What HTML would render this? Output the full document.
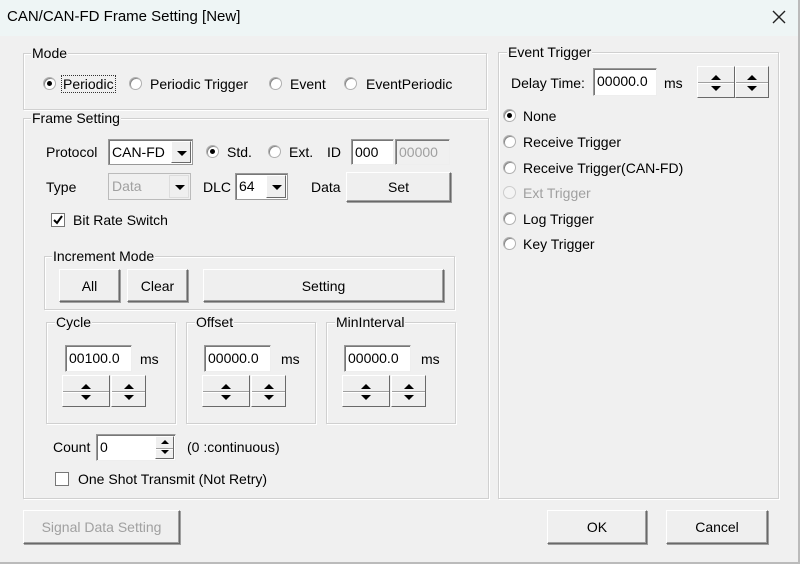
<!DOCTYPE html>
<html><head><meta charset="utf-8"><style>
*{box-sizing:border-box;margin:0;padding:0}
body{width:800px;height:564px;background:#f0f0f0;font-family:"Liberation Sans",sans-serif;font-size:14px;color:#000;position:relative;overflow:hidden}
.a{position:absolute;white-space:nowrap}
.t{position:absolute;white-space:nowrap;line-height:16px}
.grp{position:absolute;border:1px solid #d0d0d0;box-shadow:inset 1px 1px 0 #fff,1px 1px 0 #fff}
.lbl{position:absolute;background:#f0f0f0;padding:0 1px;line-height:14px;top:-8px}
.btn{position:absolute;background:#efefef;border:1px solid #fff;border-right-color:#696969;border-bottom-color:#696969;box-shadow:1px 1px 0 #a0a0a0 ,inset -1px -1px 0 #a0a0a0;display:flex;align-items:center;justify-content:center}
.edit{position:absolute;background:#fff;border:1px solid #999;border-right-color:#eee;border-bottom-color:#eee;box-shadow:inset 1px 1px 0 #777;padding-left:3px;line-height:24px}
.rad{position:absolute;width:13px;height:13px;border-radius:50%;background:#fff;border:1px solid #b0b0b0;box-shadow:inset 1px 1px 0 #888}
.rad.on::after{content:"";position:absolute;left:3px;top:3px;width:5px;height:5px;border-radius:50%;background:#000}
.spin{position:absolute;background:#efefef;border:1px solid #fff;border-right-color:#696969;border-bottom-color:#696969}
.up,.dn{position:absolute;left:50%;margin-left:-5px;width:0;height:0;border-left:5px solid transparent;border-right:5px solid transparent}
.up{border-bottom:5px solid #000}
.dn{border-top:5px solid #000}
.mid{position:absolute;left:0;right:0;top:50%;border-top:1px solid #a0a0a0;border-bottom:1px solid #fff}
.combo{position:absolute;background:#fff;border:1px solid #999;box-shadow:inset 1px 1px 0 #777;padding-left:3px;line-height:24px}
.cb{position:absolute;right:1px;top:1px;bottom:1px;width:20px;background:#efefef;border:1px solid #fff;border-right-color:#696969;border-bottom-color:#696969}
.cb::after{content:"";position:absolute;left:5px;top:9px;border-left:5px solid transparent;border-right:5px solid transparent;border-top:5px solid #000}
.dis{color:#a0a0a0}
</style></head><body>
<div class="a" style="left:0;top:0;width:800px;height:36px;background:#eef5f5"></div>
<div class="t" style="left:7px;top:9px;font-size:15px">CAN/CAN-FD Frame Setting [New]</div>
<svg class="a" style="left:771px;top:9px" width="16" height="16"><path d="M2 2L14 14M14 2L2 14" stroke="#222" stroke-width="1.4"/></svg>
<div class="a" style="right:0;top:0;width:2px;height:564px;background:#bbb"></div>
<div class="a" style="left:0;bottom:0;width:800px;height:2px;background:#bbb"></div>

<!-- Mode -->
<div class="grp" style="left:23px;top:53px;width:464px;height:57px"><div class="lbl" style="left:7px">Mode</div></div>
<div class="rad on" style="left:43px;top:77px"></div>
<div class="t" style="left:62px;top:76px;outline:1px dotted #333;padding:0 1px">Periodic</div>
<div class="rad" style="left:129px;top:77px"></div><div class="t" style="left:150px;top:76px">Periodic Trigger</div>
<div class="rad" style="left:269px;top:77px"></div><div class="t" style="left:290px;top:76px">Event</div>
<div class="rad" style="left:344px;top:77px"></div><div class="t" style="left:366px;top:76px">EventPeriodic</div>

<!-- Frame Setting -->
<div class="grp" style="left:23px;top:118px;width:466px;height:381px"><div class="lbl" style="left:7px">Frame Setting</div></div>
<div class="t" style="left:46px;top:144px">Protocol</div>
<div class="combo" style="left:108px;top:139px;width:85px;height:26px">CAN-FD<div class="cb"></div></div>
<div class="rad on" style="left:206px;top:145px"></div><div class="t" style="left:227px;top:144px">Std.</div>
<div class="rad" style="left:268px;top:145px"></div><div class="t" style="left:289px;top:144px">Ext.</div>
<div class="t" style="left:327px;top:144px">ID</div>
<div class="edit" style="left:351px;top:139px;width:43px;height:26px">000</div>
<div class="edit dis" style="left:395px;top:139px;width:55px;height:26px;background:#f0f0f0">00000</div>
<div class="t" style="left:46px;top:179px">Type</div>
<div class="combo dis" style="left:108px;top:173px;width:83px;height:27px;background:#f0f0f0;border-color:#bbb;box-shadow:none">Data<div class="cb" style="border-color:#ddd"></div></div>
<div class="t" style="left:203px;top:179px">DLC</div>
<div class="combo" style="left:235px;top:173px;width:53px;height:27px">64<div class="cb"></div></div>
<div class="t" style="left:311px;top:179px">Data</div>
<div class="btn" style="left:346px;top:172px;width:105px;height:30px">Set</div>
<div class="a" style="left:51px;top:213px;width:14px;height:14px;background:#fff;border:1px solid #777"></div>
<svg class="a" style="left:51px;top:213px" width="14" height="14"><path d="M3 7L6 10L11 3" stroke="#000" stroke-width="2" fill="none"/></svg>
<div class="t" style="left:73px;top:212px">Bit Rate Switch</div>

<div class="grp" style="left:44px;top:256px;width:411px;height:54px"><div class="lbl" style="left:7px">Increment Mode</div></div>
<div class="btn" style="left:59px;top:269px;width:61px;height:33px">All</div>
<div class="btn" style="left:127px;top:269px;width:61px;height:33px">Clear</div>
<div class="btn" style="left:203px;top:269px;width:241px;height:33px">Setting</div>

<div class="grp" style="left:46px;top:322px;width:130px;height:102px"><div class="lbl" style="left:8px">Cycle</div></div>
<div class="grp" style="left:186px;top:322px;width:130px;height:102px"><div class="lbl" style="left:8px">Offset</div></div>
<div class="grp" style="left:326px;top:322px;width:130px;height:102px"><div class="lbl" style="left:8px">MinInterval</div></div>

<div class="edit" style="left:65px;top:345px;width:67px;height:27px">00100.0</div><div class="t" style="left:140px;top:351px">ms</div>
<div class="edit" style="left:204px;top:345px;width:67px;height:27px">00000.0</div><div class="t" style="left:281px;top:351px">ms</div>
<div class="edit" style="left:344px;top:345px;width:67px;height:27px">00000.0</div><div class="t" style="left:421px;top:351px">ms</div>

<div class="spin" style="left:62px;top:375px;width:48px;height:32px"><div class="mid"></div><div class="up" style="top:8px"></div><div class="dn" style="top:19px"></div></div>
<div class="spin" style="left:111px;top:375px;width:35px;height:32px"><div class="mid"></div><div class="up" style="top:8px"></div><div class="dn" style="top:19px"></div></div>
<div class="spin" style="left:202px;top:375px;width:48px;height:32px"><div class="mid"></div><div class="up" style="top:8px"></div><div class="dn" style="top:19px"></div></div>
<div class="spin" style="left:251px;top:375px;width:35px;height:32px"><div class="mid"></div><div class="up" style="top:8px"></div><div class="dn" style="top:19px"></div></div>
<div class="spin" style="left:342px;top:375px;width:48px;height:32px"><div class="mid"></div><div class="up" style="top:8px"></div><div class="dn" style="top:19px"></div></div>
<div class="spin" style="left:391px;top:375px;width:35px;height:32px"><div class="mid"></div><div class="up" style="top:8px"></div><div class="dn" style="top:19px"></div></div>

<div class="t" style="left:53px;top:439px">Count</div>
<div class="edit" style="left:96px;top:434px;width:80px;height:27px">0</div>
<div class="spin" style="left:155px;top:436px;width:19px;height:23px"><div class="mid"></div><div class="up" style="top:3px;margin-left:-4px;border-width:0 4px 4px"></div><div class="dn" style="top:13px;margin-left:-4px;border-width:4px 4px 0"></div></div>
<div class="t" style="left:187px;top:439px">(0 :continuous)</div>
<div class="a" style="left:55px;top:472px;width:14px;height:14px;background:#fff;border:1px solid #777"></div>
<div class="t" style="left:78px;top:471px">One Shot Transmit (Not Retry)</div>

<div class="btn dis" style="left:23px;top:510px;width:157px;height:34px">Signal Data Setting</div>

<!-- Event Trigger -->
<div class="grp" style="left:498px;top:52px;width:281px;height:447px"><div class="lbl" style="left:8px">Event Trigger</div></div>
<div class="t" style="left:511px;top:75px">Delay Time:</div>
<div class="edit" style="left:593px;top:68px;width:64px;height:28px">00000.0</div>
<div class="t" style="left:664px;top:75px">ms</div>
<div class="spin" style="left:697px;top:66px;width:38px;height:32px"><div class="mid"></div><div class="up" style="top:8px"></div><div class="dn" style="top:19px"></div></div>
<div class="spin" style="left:735px;top:66px;width:34px;height:32px"><div class="mid"></div><div class="up" style="top:8px"></div><div class="dn" style="top:19px"></div></div>
<div class="rad on" style="left:503px;top:109px"></div><div class="t" style="left:523px;top:108px">None</div>
<div class="rad" style="left:503px;top:135px"></div><div class="t" style="left:523px;top:134px">Receive Trigger</div>
<div class="rad" style="left:503px;top:161px"></div><div class="t" style="left:523px;top:160px">Receive Trigger(CAN-FD)</div>
<div class="rad" style="left:503px;top:186px;border-color:#ccc;box-shadow:none;background:#f4f4f4"></div><div class="t dis" style="left:523px;top:185px">Ext Trigger</div>
<div class="rad" style="left:503px;top:212px"></div><div class="t" style="left:523px;top:211px">Log Trigger</div>
<div class="rad" style="left:503px;top:237px"></div><div class="t" style="left:523px;top:236px">Key Trigger</div>

<div class="btn" style="left:547px;top:510px;width:100px;height:34px">OK</div>
<div class="btn" style="left:666px;top:510px;width:102px;height:34px">Cancel</div>
</body></html>
